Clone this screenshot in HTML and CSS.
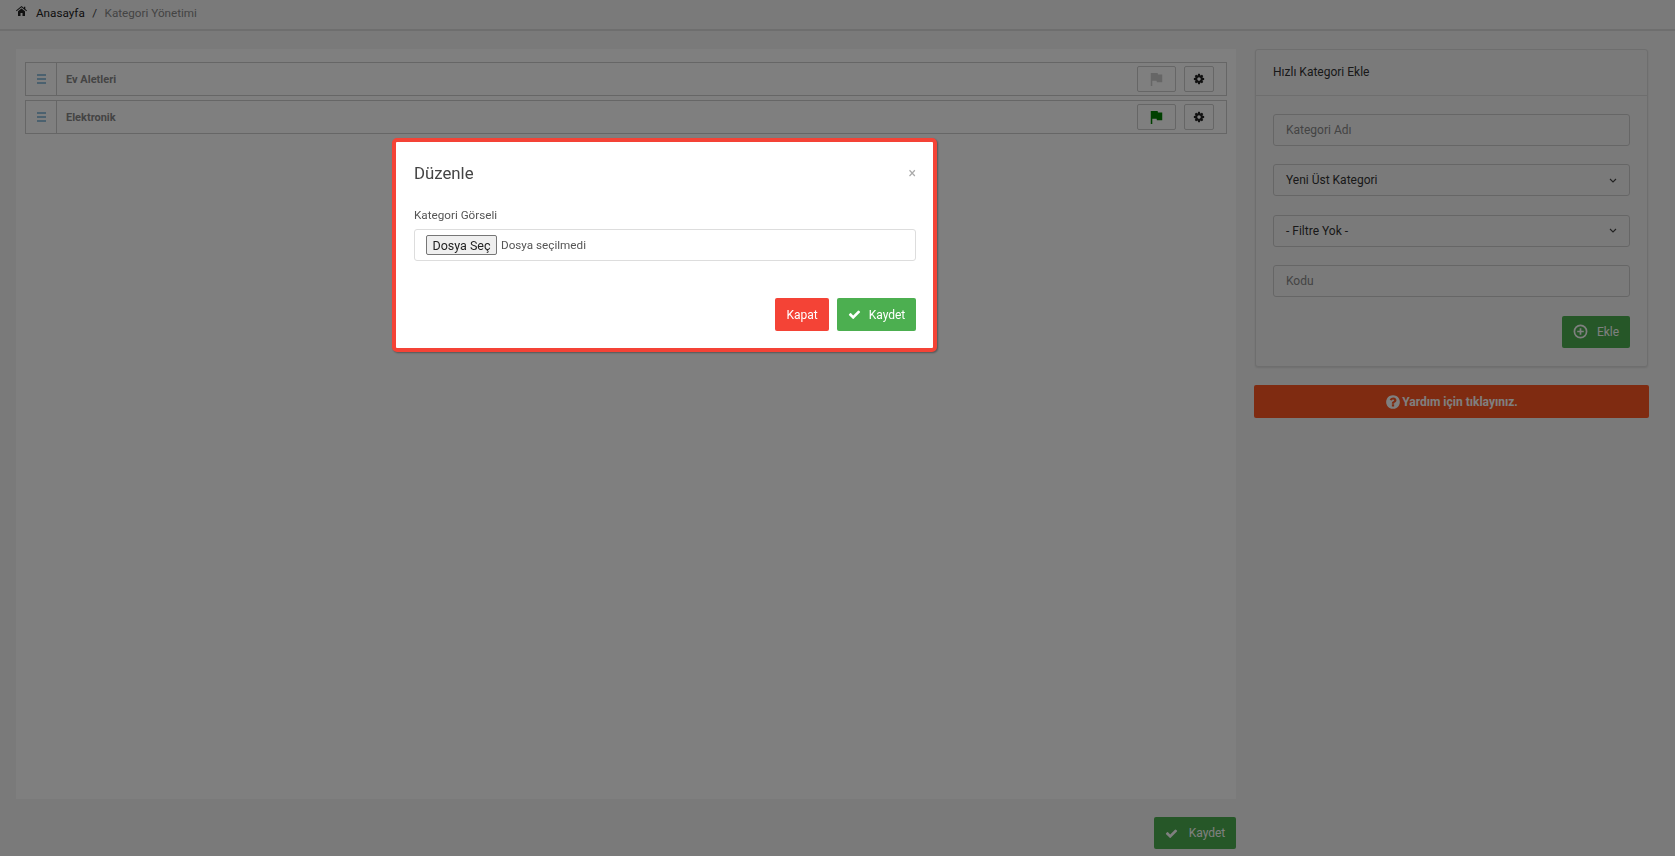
FILE: index.html
```html
<!DOCTYPE html>
<html lang="en">
<head>
    <meta charset="UTF-8">
    <meta name="viewport" content="width=device-width, initial-scale=1.0">
    <title>Kategori Yönetimi</title>
    <link rel="stylesheet" href="styles.css">
</head>
<body>

    <svg class="icon-defs" width="0" height="0">
        <symbol id="i-home" viewBox="0 0 11 10"><path d="M5.500 0L8 2V.8h1.300v2.300L11 4.600l-.6.700-4.900-4.100L.6 5.300 0 4.600z"/><path d="M2 5.300l3.500-2.900L9 5.300V10H6.500V7h-2v3H2z"/></symbol>
        <symbol id="i-flag" viewBox="5 4 15 17"><path d="M14.400 6L14 4H5v17h2v-7h5.600l.4 2h7V6z"/></symbol>
        <symbol id="i-cog" viewBox="0 0 1792 1792"><path d="M1152 896q0-106-75-181t-181-75-181 75-75 181 75 181 181 75 181-75 75-181zm512-109v222q0 12-8 23t-20 13l-185 28q-19 54-39 91 35 50 107 138 10 12 10 25t-9 23q-27 37-99 108t-94 71q-12 0-26-9l-138-108q-44 23-91 38-16 136-29 186-7 28-36 28h-222q-14 0-24.500-8.500t-11.500-21.500l-28-184q-49-16-90-37l-141 107q-10 9-25 9-14 0-25-11-126-114-165-168-7-10-7-23 0-12 8-23 15-21 51-66.500t54-70.500q-27-50-41-99l-183-27q-13-2-21-12.500t-8-23.500v-222q0-12 8-23t19-13l186-28q14-46 39-92-40-57-107-138-10-12-10-24 0-10 9-23 26-36 98.500-107.500t94.500-71.500q13 0 26 10l138 107q44-23 91-38 16-136 29-186 7-28 36-28h222q14 0 24.500 8.500t11.500 21.500l28 184q49 16 90 37l142-107q9-9 24-9 13 0 25 10 129 119 165 170 7 8 7 22 0 12-8 23-15 21-51 66.500t-54 70.500q26 50 41 98l183 28q13 2 21 12.500t8 23.500z"/></symbol>
        <symbol id="i-check" viewBox="0 0 1792 1792"><path d="M1671 566q0 40-28 68l-724 724-136 136q-28 28-68 28t-68-28l-136-136-362-362q-28-28-28-68t28-68l136-136q28-28 68-28t68 28l294 295 656-657q28-28 68-28t68 28l136 136q28 28 28 68z"/></symbol>
        <symbol id="i-help" viewBox="0 0 1792 1792"><path d="M1024 1376v-192q0-14-9-23t-23-9h-192q-14 0-23 9t-9 23v192q0 14 9 23t23 9h192q14 0 23-9t9-23zm256-672q0-88-55.500-163t-138.500-116-170-41q-243 0-371 213-15 24 8 42l132 100q7 6 19 6 16 0 25-12 53-68 86-92 34-24 86-24 48 0 85.500 26t37.500 59q0 38-20 61t-68 45q-63 28-115.500 86.500t-52.500 125.500v36q0 14 9 23t23 9h192q14 0 23-9t9-23q0-19 21.500-49.500t54.500-49.500q32-18 49-28.500t46-35 44.500-48 28-60.500 12.500-81zm384 192q0 209-103 385.500t-279.500 279.500-385.500 103-385.500-103-279.500-279.500-103-385.500 103-385.500 279.500-279.500 385.500-103 385.500 103 279.500 279.500 103 385.500z"/></symbol>
    </svg>

    <nav class="breadcrumb">
        <svg class="icon icon-home"><use href="#i-home"/></svg>
        <a class="crumb-link">Anasayfa</a>
        <span class="crumb-sep">/</span>
        <span class="crumb-current">Kategori Yönetimi</span>
    </nav>

    <div class="page">
        <div class="left-col">
            <div class="tree-panel">
                <div class="tree-row">
                    <div class="tree-handle">
                        <svg class="bars" viewBox="0 0 9 10"><path d="M0 1h9M0 5h9M0 9h9"/></svg>
                    </div>
                    <div class="tree-name">Ev Aletleri</div>
                    <button class="tool-btn flag-btn"><svg class="icon flag-off"><use href="#i-flag"/></svg></button>
                    <button class="tool-btn cog-btn"><svg class="icon"><use href="#i-cog"/></svg></button>
                </div>
                <div class="tree-row">
                    <div class="tree-handle">
                        <svg class="bars" viewBox="0 0 9 10"><path d="M0 1h9M0 5h9M0 9h9"/></svg>
                    </div>
                    <div class="tree-name">Elektronik</div>
                    <button class="tool-btn flag-btn"><svg class="icon flag-on"><use href="#i-flag"/></svg></button>
                    <button class="tool-btn cog-btn"><svg class="icon"><use href="#i-cog"/></svg></button>
                </div>
            </div>
            <div class="save-row">
                <button class="btn btn-green btn-save"><svg class="icon"><use href="#i-check"/></svg>Kaydet</button>
            </div>
        </div>

        <aside class="right-col">
            <div class="card">
                <div class="card-head">Hızlı Kategori Ekle</div>
                <div class="card-body">
                    <div class="field placeholder">Kategori Adı</div>
                    <div class="field select">Yeni Üst Kategori
                        <svg class="chevron" viewBox="0 0 8 5"><path d="M1 1l3 3 3-3"/></svg>
                    </div>
                    <div class="field select">- Filtre Yok -
                        <svg class="chevron" viewBox="0 0 8 5"><path d="M1 1l3 3 3-3"/></svg>
                    </div>
                    <div class="field placeholder">Kodu</div>
                    <div class="card-actions">
                        <button class="btn btn-green btn-add">
                            <svg class="plus-circle" viewBox="0 0 16 16"><circle cx="8" cy="8" r="6.500"/><path d="M8 4.500v7M4.500 8h7"/></svg>Ekle
                        </button>
                    </div>
                </div>
            </div>
            <button class="help-btn"><svg class="icon"><use href="#i-help"/></svg>Yardım için tıklayınız.</button>
        </aside>
    </div>

    <div class="backdrop"></div>

    <div class="modal">
        <div class="modal-head">
            <h4>Düzenle</h4>
            <span class="modal-close">×</span>
        </div>
        <div class="modal-body">
            <label>Kategori Görseli</label>
            <div class="file-field">
                <button class="file-btn">Dosya Seç</button>
                <span>Dosya seçilmedi</span>
            </div>
        </div>
        <div class="modal-foot">
            <button class="btn btn-red">Kapat</button>
            <button class="btn btn-green btn-modal-save"><svg class="icon"><use href="#i-check"/></svg>Kaydet</button>
        </div>
    </div>

</body>
</html>
```

FILE: styles.css
```css
* {
    box-sizing: border-box;
}

html, body {
    height: 100%;
}

body {
    margin: 0;
    overflow: hidden;
    background: #f5f5f5;
    color: #333;
    font-family: 'Roboto', sans-serif;
    font-size: 12px;
}

button {
    font-family: inherit;
    cursor: pointer;
}

.icon-defs {
    position: absolute;
}

.icon {
    width: 13px;
    height: 13px;
    fill: currentColor;
}

/* breadcrumb */
.breadcrumb {
    display: flex;
    align-items: center;
    height: 31px;
    padding: 0 0 4px 16px;
    border-bottom: 2px solid #ddd;
    font-size: 11.700px;
}

.icon-home {
    width: 11px;
    height: 10px;
    margin-right: 9px;
    margin-top: -3px;
    color: #222;
}

.crumb-link {
    color: #222;
}

.crumb-sep {
    margin: 0 7.500px;
    color: #444;
}

.crumb-current {
    color: #888;
}

/* main columns */
.page {
    display: flex;
    height: 825px;
    padding: 18px 26px 0 16px;
    gap: 18px;
}

.left-col {
    width: 1220px;
}

.tree-panel {
    height: 750px;
    padding: 13px 9px;
    background: #fff;
}

.tree-row {
    display: flex;
    align-items: center;
    height: 34px;
    margin-bottom: 4px;
    border: 1px solid #ccc;
}

.tree-handle {
    display: flex;
    align-items: center;
    justify-content: center;
    align-self: stretch;
    width: 31px;
    border-right: 1px solid #ccc;
}

.bars {
    width: 9px;
    height: 10px;
    stroke: #2f86bd;
    stroke-width: 1.200;
    fill: none;
}

.tree-name {
    flex: 1;
    padding-left: 9px;
    font-size: 11px;
    font-weight: 700;
    color: #888;
}

.tool-btn {
    display: flex;
    align-items: center;
    justify-content: center;
    height: 26px;
    padding: 0;
    background: #fff;
    border: 1px solid #ccc;
    border-radius: 2px;
}

.flag-btn {
    width: 39px;
    margin-right: 8px;
}

.cog-btn {
    width: 30px;
    margin-right: 12px;
    color: #222;
}

.cog-btn .icon {
    width: 12px;
    height: 12px;
}

.flag-off {
    color: #ccc;
}

.flag-on {
    color: #008000;
}

.save-row {
    display: flex;
    justify-content: flex-end;
    padding-top: 18px;
}

/* buttons */
.btn {
    display: inline-flex;
    align-items: center;
    justify-content: center;
    height: 32px;
    padding: 0;
    border: none;
    border-radius: 2px;
    font-size: 12px;
    color: #fff;
}

.btn-green {
    background: #4caf50;
}

.btn-red {
    background: #f44336;
    width: 54px;
    height: 33px;
}

.btn-save {
    width: 82px;
}

.btn-save .icon {
    margin-right: 11px;
}

.btn-add {
    width: 68px;
}

.plus-circle {
    width: 15px;
    height: 15px;
    margin-right: 9px;
    fill: none;
    stroke: currentColor;
    stroke-width: 1.800;
}

/* right side */
.right-col {
    width: 395px;
}

.card {
    height: 318px;
    margin: 0 1px;
    background: #f5f5f5;
    border: 1px solid #ddd;
    border-radius: 3px;
    box-shadow: 0 1px 2px rgba(0, 0, 0, 0.1);
}

.card-head {
    display: flex;
    align-items: center;
    height: 46px;
    padding: 0 0 2px 17px;
    border-bottom: 1px solid #ddd;
    font-size: 12px;
}

.card-body {
    padding: 18px 17px;
}

.field {
    display: flex;
    align-items: center;
    justify-content: space-between;
    height: 32px;
    margin-bottom: 18.400px;
    padding: 0 12px;
    border: 1px solid #ccc;
    border-radius: 3px;
    font-size: 12px;
}

.placeholder {
    color: #888;
}

.chevron {
    width: 8px;
    height: 5px;
    fill: none;
    stroke: #444;
    stroke-width: 1.100;
}

.card-actions {
    display: flex;
    justify-content: flex-end;
}

.help-btn {
    display: flex;
    align-items: center;
    justify-content: center;
    width: 100%;
    height: 33px;
    margin-top: 18px;
    border: none;
    border-radius: 2px;
    background: #ff5722;
    color: #fff;
    font-size: 12px;
    font-weight: 700;
}

.help-btn .icon {
    width: 16px;
    height: 16px;
    margin-right: 1px;
}

/* modal */
.backdrop {
    position: fixed;
    inset: 0;
    background: rgba(0, 0, 0, 0.5);
}

.modal {
    position: fixed;
    top: 138px;
    left: 392px;
    width: 545px;
    height: 214px;
    padding: 0 17px 0 18px;
    background: #fff;
    border: 4px solid #f44336;
    border-radius: 5px;
    box-shadow: 1px 1px 2px rgba(0, 0, 0, 0.35);
}

.modal-head {
    display: flex;
    align-items: center;
    justify-content: space-between;
    height: 60px;
    padding-top: 2px;
}

.modal-head h4 {
    margin: 0;
    font-size: 16.800px;
    font-weight: 400;
    color: #444;
}

.modal-close {
    font-size: 14px;
    color: #aaa;
}

.modal-body {
    padding-top: 6px;
}

.modal-body label {
    display: block;
    height: 21px;
    font-size: 11.700px;
    color: #555;
}

.file-field {
    display: flex;
    align-items: center;
    height: 32px;
    padding-left: 11px;
    border: 1px solid #ddd;
    border-radius: 3px;
    font-size: 11.700px;
    color: #555;
}

.file-btn {
    height: 20px;
    width: 71px;
    margin-right: 4px;
    padding: 0;
    background: #efefef;
    border: 1px solid #767676;
    border-radius: 2px;
    color: #222;
    font-size: 12.500px;
}

.modal-foot {
    display: flex;
    justify-content: flex-end;
    gap: 8px;
    margin-top: 37px;
}

.btn-modal-save {
    width: 79px;
    height: 33px;
}

.btn-modal-save .icon {
    margin-right: 8px;
}
```
